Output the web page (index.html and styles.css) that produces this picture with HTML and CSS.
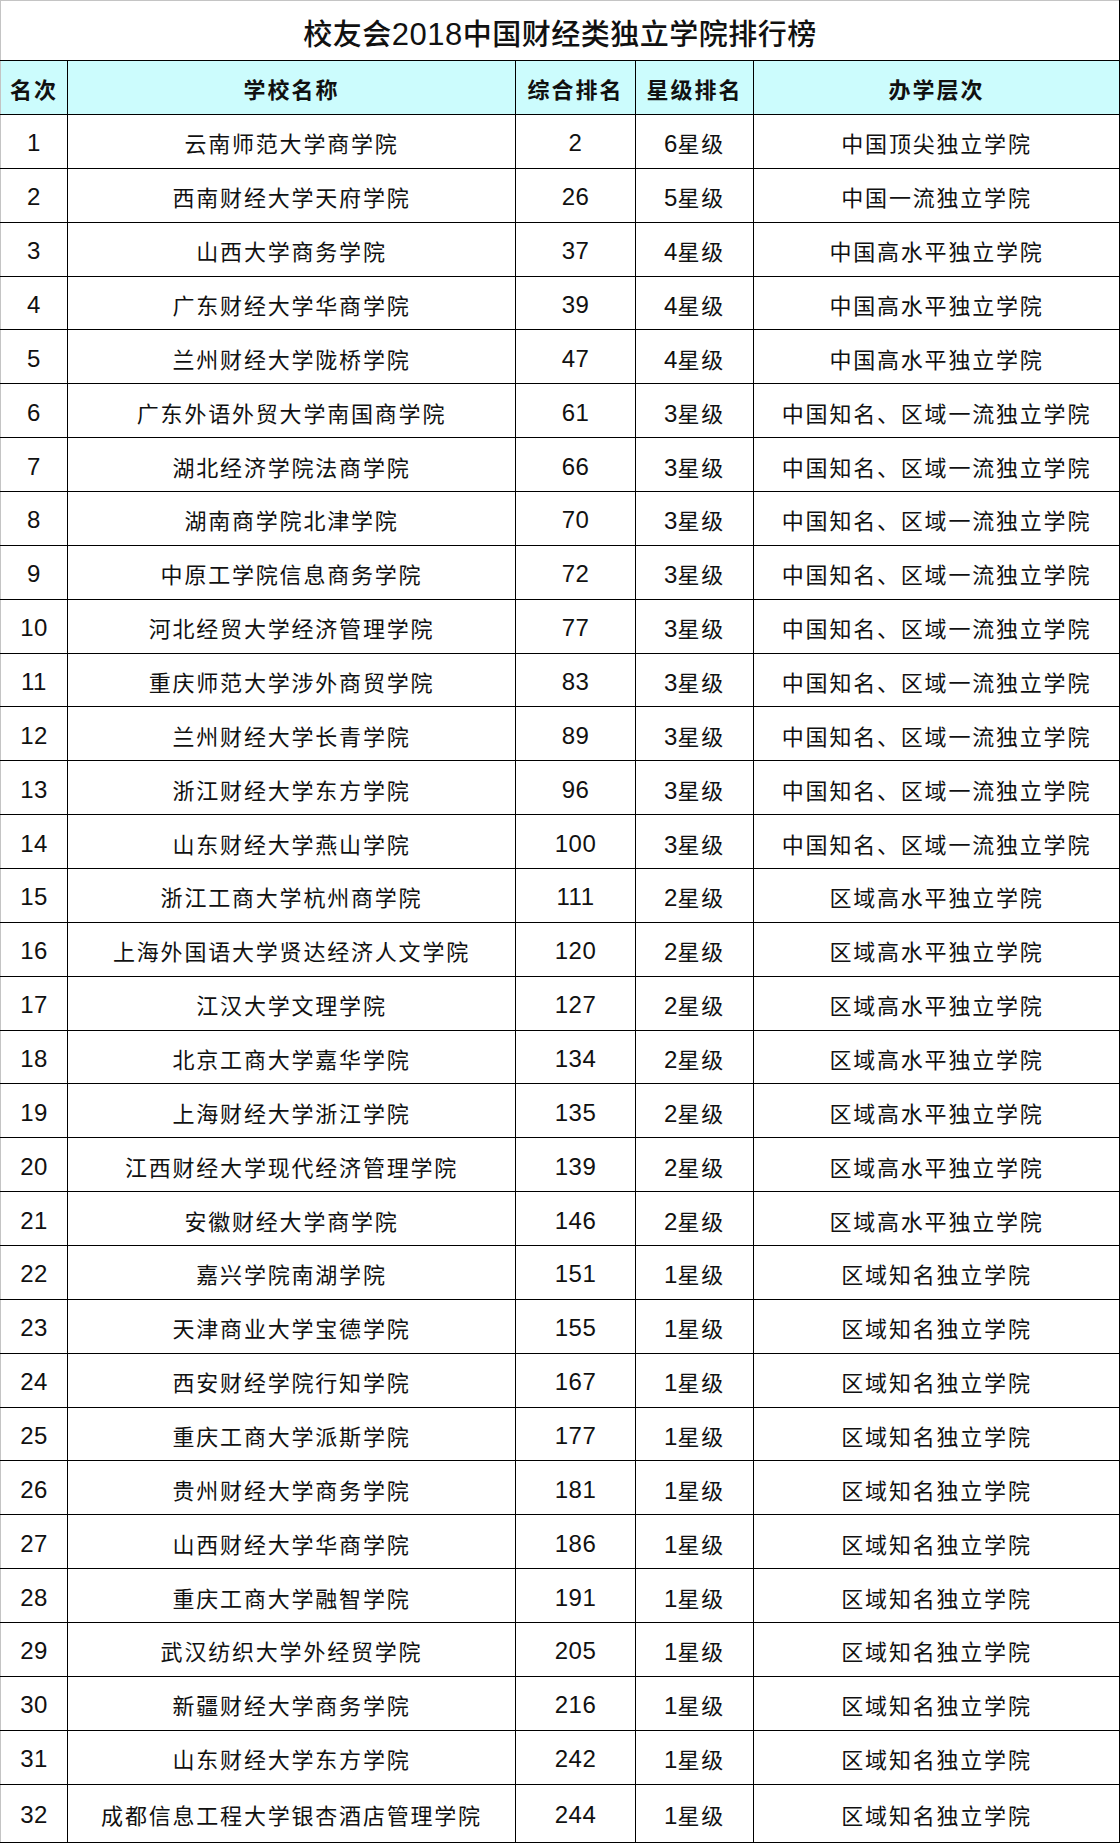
FILE: index.html
```html
<!DOCTYPE html>
<html lang="zh-CN">
<head>
<meta charset="utf-8">
<title>校友会2018中国财经类独立学院排行榜</title>
<link rel="stylesheet" href="styles.css">
</head>
<body>
<table class="rank">
<colgroup>
<col class="c-no"><col class="c-name"><col class="c-total"><col class="c-star"><col class="c-level">
</colgroup>
<thead>
<tr class="title-row"><th colspan="5" class="title">校友会<span class="tnum">2018</span>中国财经类独立学院排行榜</th></tr>
<tr class="head-row"><th>名次</th><th>学校名称</th><th>综合排名</th><th>星级排名</th><th>办学层次</th></tr>
</thead>
<tbody>
<tr><td class="num">1</td><td>云南师范大学商学院</td><td class="num">2</td><td><span class="d">6</span>星级</td><td>中国顶尖独立学院</td></tr>
<tr><td class="num">2</td><td>西南财经大学天府学院</td><td class="num">26</td><td><span class="d">5</span>星级</td><td>中国一流独立学院</td></tr>
<tr><td class="num">3</td><td>山西大学商务学院</td><td class="num">37</td><td><span class="d">4</span>星级</td><td>中国高水平独立学院</td></tr>
<tr><td class="num">4</td><td>广东财经大学华商学院</td><td class="num">39</td><td><span class="d">4</span>星级</td><td>中国高水平独立学院</td></tr>
<tr><td class="num">5</td><td>兰州财经大学陇桥学院</td><td class="num">47</td><td><span class="d">4</span>星级</td><td>中国高水平独立学院</td></tr>
<tr><td class="num">6</td><td>广东外语外贸大学南国商学院</td><td class="num">61</td><td><span class="d">3</span>星级</td><td>中国知名、区域一流独立学院</td></tr>
<tr><td class="num">7</td><td>湖北经济学院法商学院</td><td class="num">66</td><td><span class="d">3</span>星级</td><td>中国知名、区域一流独立学院</td></tr>
<tr><td class="num">8</td><td>湖南商学院北津学院</td><td class="num">70</td><td><span class="d">3</span>星级</td><td>中国知名、区域一流独立学院</td></tr>
<tr><td class="num">9</td><td>中原工学院信息商务学院</td><td class="num">72</td><td><span class="d">3</span>星级</td><td>中国知名、区域一流独立学院</td></tr>
<tr><td class="num">10</td><td>河北经贸大学经济管理学院</td><td class="num">77</td><td><span class="d">3</span>星级</td><td>中国知名、区域一流独立学院</td></tr>
<tr><td class="num">11</td><td>重庆师范大学涉外商贸学院</td><td class="num">83</td><td><span class="d">3</span>星级</td><td>中国知名、区域一流独立学院</td></tr>
<tr><td class="num">12</td><td>兰州财经大学长青学院</td><td class="num">89</td><td><span class="d">3</span>星级</td><td>中国知名、区域一流独立学院</td></tr>
<tr><td class="num">13</td><td>浙江财经大学东方学院</td><td class="num">96</td><td><span class="d">3</span>星级</td><td>中国知名、区域一流独立学院</td></tr>
<tr><td class="num">14</td><td>山东财经大学燕山学院</td><td class="num">100</td><td><span class="d">3</span>星级</td><td>中国知名、区域一流独立学院</td></tr>
<tr><td class="num">15</td><td>浙江工商大学杭州商学院</td><td class="num">111</td><td><span class="d">2</span>星级</td><td>区域高水平独立学院</td></tr>
<tr><td class="num">16</td><td>上海外国语大学贤达经济人文学院</td><td class="num">120</td><td><span class="d">2</span>星级</td><td>区域高水平独立学院</td></tr>
<tr><td class="num">17</td><td>江汉大学文理学院</td><td class="num">127</td><td><span class="d">2</span>星级</td><td>区域高水平独立学院</td></tr>
<tr><td class="num">18</td><td>北京工商大学嘉华学院</td><td class="num">134</td><td><span class="d">2</span>星级</td><td>区域高水平独立学院</td></tr>
<tr><td class="num">19</td><td>上海财经大学浙江学院</td><td class="num">135</td><td><span class="d">2</span>星级</td><td>区域高水平独立学院</td></tr>
<tr><td class="num">20</td><td>江西财经大学现代经济管理学院</td><td class="num">139</td><td><span class="d">2</span>星级</td><td>区域高水平独立学院</td></tr>
<tr><td class="num">21</td><td>安徽财经大学商学院</td><td class="num">146</td><td><span class="d">2</span>星级</td><td>区域高水平独立学院</td></tr>
<tr><td class="num">22</td><td>嘉兴学院南湖学院</td><td class="num">151</td><td><span class="d">1</span>星级</td><td>区域知名独立学院</td></tr>
<tr><td class="num">23</td><td>天津商业大学宝德学院</td><td class="num">155</td><td><span class="d">1</span>星级</td><td>区域知名独立学院</td></tr>
<tr><td class="num">24</td><td>西安财经学院行知学院</td><td class="num">167</td><td><span class="d">1</span>星级</td><td>区域知名独立学院</td></tr>
<tr><td class="num">25</td><td>重庆工商大学派斯学院</td><td class="num">177</td><td><span class="d">1</span>星级</td><td>区域知名独立学院</td></tr>
<tr><td class="num">26</td><td>贵州财经大学商务学院</td><td class="num">181</td><td><span class="d">1</span>星级</td><td>区域知名独立学院</td></tr>
<tr><td class="num">27</td><td>山西财经大学华商学院</td><td class="num">186</td><td><span class="d">1</span>星级</td><td>区域知名独立学院</td></tr>
<tr><td class="num">28</td><td>重庆工商大学融智学院</td><td class="num">191</td><td><span class="d">1</span>星级</td><td>区域知名独立学院</td></tr>
<tr><td class="num">29</td><td>武汉纺织大学外经贸学院</td><td class="num">205</td><td><span class="d">1</span>星级</td><td>区域知名独立学院</td></tr>
<tr><td class="num">30</td><td>新疆财经大学商务学院</td><td class="num">216</td><td><span class="d">1</span>星级</td><td>区域知名独立学院</td></tr>
<tr><td class="num">31</td><td>山东财经大学东方学院</td><td class="num">242</td><td><span class="d">1</span>星级</td><td>区域知名独立学院</td></tr>
<tr class="last-row"><td class="num">32</td><td>成都信息工程大学银杏酒店管理学院</td><td class="num">244</td><td><span class="d">1</span>星级</td><td>区域知名独立学院</td></tr>
</tbody>
</table>
</body>
</html>
```

FILE: styles.css
```css
html, body {
  margin: 0;
  padding: 0;
  background: #fff;
}

.rank {
  width: 1119px;
  table-layout: fixed;
  border-collapse: collapse;
  font-family: "Liberation Sans", "Noto Sans CJK SC", sans-serif;
  color: #111;
}

.c-no { width: 67px; }
.c-name { width: 448px; }
.c-total { width: 120px; }
.c-star { width: 118px; }
.c-level { width: 366px; }

.rank th,
.rank td {
  border: 1px solid #000;
  text-align: center;
  vertical-align: middle;
  padding: 2px 0 0 0;
  white-space: nowrap;
  box-sizing: border-box;
}

.rank th:first-child,
.rank td:first-child {
  border-left-color: #c4c4c4;
}

.title-row th.title {
  height: 60px;
  border-top-color: #c4c4c4;
  border-left-color: #c4c4c4;
  font-size: 29px;
  font-weight: 500;
  letter-spacing: 0.5px;
  padding-top: 3px;
}

.title .tnum {
  font-size: 31px;
  font-weight: 400;
}

.head-row th {
  height: 54px;
  background: #ccfcfd;
  font-size: 22px;
  font-weight: 700;
  letter-spacing: 2px;
  padding-top: 0;
}

.rank tbody td {
  height: 53.87px;
  font-size: 22px;
  font-weight: 400;
  letter-spacing: 1.8px;
}

.rank tbody td.num {
  font-size: 24px;
  letter-spacing: 0.5px;
  padding-top: 4px;
}

.rank tbody td .d {
  font-size: 24px;
  letter-spacing: 0;
}

.rank tbody tr.last-row td {
  height: 58px;
}
```
